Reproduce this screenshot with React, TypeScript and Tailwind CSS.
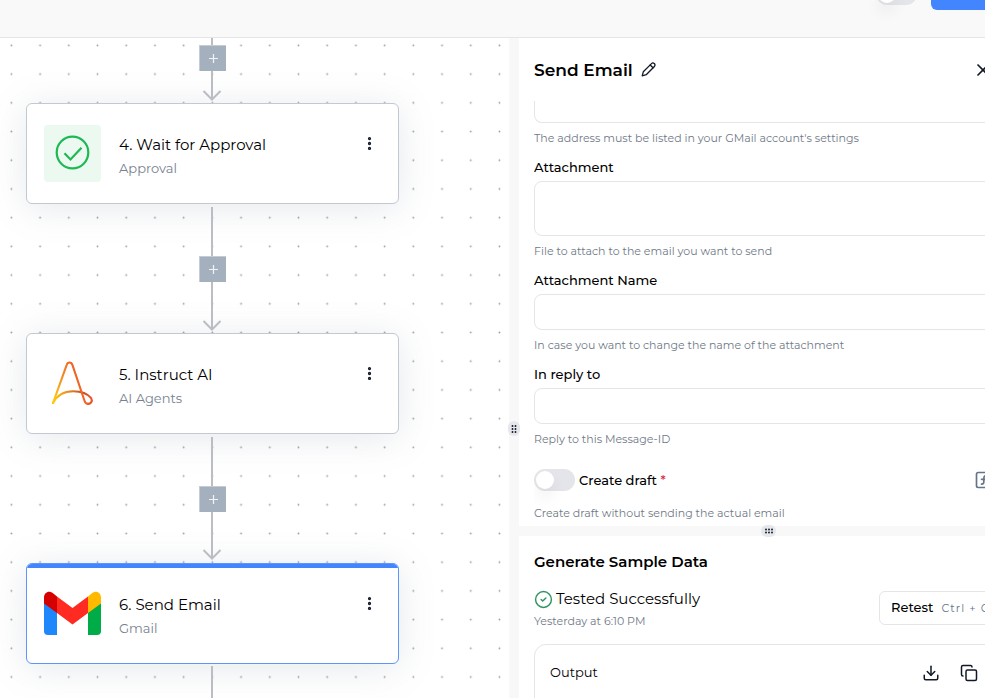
import { ReactNode, useState } from 'react';
import { CircleCheck, Copy, Download, EllipsisVertical, SquareFunction, X } from 'lucide-react';

const ZOOM = 0.957;
const GRID = 30 * ZOOM;

function ApprovalIcon() {
  return (
    <svg className="w-[57px] h-[57px] rounded-sm bg-[#ecf9f1]" viewBox="0 0 57 57" fill="none" stroke="#1fb954" strokeWidth={2.2}>
      <circle cx="28.5" cy="27.5" r="15.8" />
      <path d="M20.5 28.2l6 6.2L37.5 22.8" />
    </svg>
  );
}

function AgentIcon() {
  return (
    <svg className="w-[57px] h-[57px]" viewBox="0 0 57 57" fill="none" strokeWidth={2.1} strokeLinecap="round" strokeLinejoin="round">
      <defs>
        <linearGradient id="agent" gradientUnits="userSpaceOnUse" x1="8" y1="40" x2="40" y2="28">
          <stop offset="0" stopColor="#ffc90e" />
          <stop offset="0.5" stopColor="#f2892a" />
          <stop offset="1" stopColor="#ee5626" />
        </linearGradient>
        <linearGradient id="agentArc" gradientUnits="userSpaceOnUse" x1="9" y1="48" x2="47" y2="38">
          <stop offset="0" stopColor="#ffd000" />
          <stop offset="0.45" stopColor="#ec8a22" />
          <stop offset="0.78" stopColor="#c05420" />
          <stop offset="1" stopColor="#f0562a" />
        </linearGradient>
      </defs>
      <path stroke="url(#agentArc)" d="M9 48C13 40 20 36.3 29 36.2C38 36.2 44 39 47.200 43.200C49 46.500 46.500 49.200 43.500 48.800" />
      <path stroke="url(#agent)" d="M9 48L22.700 9.800C23.600 6.800 27.400 6.800 28.400 9.800L40.400 45.500C41 47.700 42 48.800 43.800 48.800" />
    </svg>
  );
}

function GmailIcon() {
  return (
    <svg className="w-[57px] h-[57px]" viewBox="0 0 57 57">
      <path fill="#1f87fc" d="M0 17L13 26V50H4a4 4 0 0 1-4-4z" />
      <path fill="#00ac47" d="M57 17L44 26V50h9a4 4 0 0 0 4-4z" />
      <path fill="#ffba00" d="M44 11.500l4-3.200C52 4.800 57 7.500 57 12.500V18.500L44 28z" />
      <path fill="#d50000" d="M0 12.500C0 7.500 5 4.800 9 8.300L13 11.500V28L0 18.500z" />
      <path fill="#ff2b22" d="M13 11.500L28.500 23L44 11.500V28L28.500 39.500L13 28z" />
    </svg>
  );
}

function PencilIcon() {
  return (
    <svg width="15" height="15" viewBox="0 0 15 15" fill="none" stroke="#111827" strokeWidth={1.3} strokeLinejoin="round" strokeLinecap="round">
      <path d="M1.200 13.800L2.300 9.800L10.500 1.600C11.300 .8 12.500 .8 13.300 1.600C14.200 2.400 14.200 3.700 13.400 4.500L5.200 12.700Z" />
      <path d="M9.200 3L12 5.800" />
    </svg>
  );
}

type StepProps = { className: string; title: string; app: string; icon: ReactNode; selected?: boolean };

function StepNode({ className, title, app, icon, selected }: StepProps) {
  return (
    <div
      className={`absolute left-[26px] w-[373px] h-[101px] rounded-md border bg-white shadow-[0_4px_36px_rgba(100,116,139,0.17)] overflow-hidden ${
        selected ? 'border-[#5c95fb]' : 'border-[#c2c9d2]'
      } ${className}`}
    >
      <div className={`h-1 ${selected ? 'bg-[#4285ff]' : ''}`} />
      <div className="flex items-start gap-[18px] pt-[17px] pl-[17px] pr-[17px]">
        {icon}
        <div className="flex-1 mt-2">
          <div className="text-[15px] leading-6 text-black">{title}</div>
          <div className="text-[13px] leading-[22px] text-[#77818e]">{app}</div>
        </div>
        <button type="button" aria-label="Step actions" className="mt-2 w-6 h-5 flex items-center justify-center">
          <EllipsisVertical size={17} strokeWidth={2.6} />
        </button>
      </div>
    </div>
  );
}

function AddButton({ className }: { className: string }) {
  return (
    <button
      type="button"
      aria-label="Add step"
      className={`absolute left-[199px] w-[27px] h-[26px] border-l border-t border-[#c5ccd5] bg-[#a5b0be] flex items-center justify-center ${className}`}
    >
      <svg width="9" height="9" viewBox="0 0 9 9" stroke="#f1f4f7" strokeWidth={1.2}>
        <path d="M4.500 0V9M0 4.500H9" />
      </svg>
    </button>
  );
}

function FlowCanvas() {
  return (
    <div className="relative flex-[509] min-w-0 overflow-hidden bg-white">
      <svg className="w-full h-full" fill="none">
        <pattern id="dots" x={11.4 - GRID / 2} y={7.4 - GRID / 2} width={GRID} height={GRID} patternUnits="userSpaceOnUse">
          <circle cx={GRID / 2} cy={GRID / 2} r="0.9" fill="#9a9da2" />
        </pattern>
        <rect width="100%" height="100%" fill="url(#dots)" />
      </svg>
      <StepNode className="top-[65px]" title="4. Wait for Approval" app="Approval" icon={<ApprovalIcon />} />
      <StepNode className="top-[295px]" title="5. Instruct AI" app="AI Agents" icon={<AgentIcon />} />
      <StepNode className="top-[525px]" title="6. Send Email" app="Gmail" icon={<GmailIcon />} selected />
      <svg className="absolute inset-0 w-full h-full pointer-events-none" fill="none" stroke="#bbbdc3" strokeWidth={2}>
        <path d="M212 0V61M203.500 53L212 61.500L220.500 53" />
        <path d="M212 169V291M203.500 283L212 291.500L220.500 283" />
        <path d="M212 399V521M203.500 512L212 520.500L220.500 512" />
        <path d="M212 628V800" />
      </svg>
      <AddButton className="top-[7px]" />
      <AddButton className="top-[218px]" />
      <AddButton className="top-[448px]" />
    </div>
  );
}

function Grip({ horizontal }: { horizontal?: boolean }) {
  return (
    <div className={`z-10 shrink-0 rounded-full bg-[#e5e7eb] flex items-center justify-center ${horizontal ? 'w-[15px] h-3' : 'w-3 h-[15px]'}`}>
      <svg width="8" height="8" viewBox="0 0 8 8" fill="#111827" className={horizontal ? 'rotate-90' : ''}>
        {[1, 4, 7].map((y) => (
          <g key={y}>
            <circle cx="2.500" cy={y} r="0.95" />
            <circle cx="5.500" cy={y} r="0.95" />
          </g>
        ))}
      </svg>
    </div>
  );
}

function Toggle({ id, label }: { id: string; label?: string }) {
  const [on, setOn] = useState(false);
  return (
    <span className={`relative inline-flex shrink-0 w-[41px] h-[22px] rounded-full ${on ? 'bg-[#4285ff]' : 'bg-[#e4e5ea]'}`}>
      <input
        id={id}
        type="checkbox"
        role="switch"
        aria-label={label}
        checked={on}
        onChange={(e) => setOn(e.target.checked)}
        className="absolute inset-0 w-full h-full appearance-none cursor-pointer"
      />
      <span
        className={`relative pointer-events-none m-0.5 w-[18px] h-[18px] rounded-full bg-white shadow-[0_10px_15px_rgba(0,0,0,0.06)] ${
          on ? 'ml-[21px]' : ''
        }`}
      />
    </span>
  );
}

function Hint({ children }: { children: ReactNode }) {
  return <p className="text-[11px] leading-4 text-[#6f7986]">{children}</p>;
}

const fieldStyle = 'block w-full mb-[7px] rounded-lg border border-[#e3e5e8] bg-white px-3 text-sm resize-none outline-none';
const labelStyle = 'block mb-1 text-[13px] leading-5 font-medium text-black';

function StepSettings() {
  return (
    <section className="h-[488px] shrink-0 flex flex-col bg-white px-[15px] overflow-hidden">
      <div className="h-[63px] shrink-0 flex items-center gap-2 pr-2.5">
        <h2 className="text-[17px] leading-6 font-semibold text-black">Send Email</h2>
        <button type="button" aria-label="Rename step">
          <PencilIcon />
        </button>
        <button type="button" aria-label="Close" className="ml-auto">
          <X size={20} strokeWidth={2} />
        </button>
      </div>
      <form className="flex-1 overflow-hidden">
        <div>
          <textarea aria-label="Sender email" className={`${fieldStyle} h-[22px] rounded-t-none border-t-0`} />
          <Hint>The address must be listed in your GMail account's settings</Hint>
        </div>
        <div className="mt-[11px]">
          <label htmlFor="attachment" className={labelStyle}>Attachment</label>
          <textarea id="attachment" className={`${fieldStyle} h-[55px]`} />
          <Hint>File to attach to the email you want to send</Hint>
        </div>
        <div className="mt-[11px]">
          <label htmlFor="attachmentName" className={labelStyle}>Attachment Name</label>
          <input id="attachmentName" type="text" className={`${fieldStyle} h-9`} />
          <Hint>In case you want to change the name of the attachment</Hint>
        </div>
        <div className="mt-[11px]">
          <label htmlFor="inReplyTo" className={labelStyle}>In reply to</label>
          <input id="inReplyTo" type="text" className={`${fieldStyle} h-9`} />
          <Hint>Reply to this Message-ID</Hint>
        </div>
        <div className="mt-[22px]">
          <div className="flex items-center gap-1 pr-[9px] mb-[14px]">
            <Toggle id="createDraft" />
            <label htmlFor="createDraft" className="text-[13px] leading-5 font-medium text-black">
              Create draft <span className="text-[#dc2645]">*</span>
            </label>
            <button type="button" aria-label="Dynamic value" className="ml-auto text-[#64748b]">
              <SquareFunction size={20} strokeWidth={2} />
            </button>
          </div>
          <Hint>Create draft without sending the actual email</Hint>
        </div>
      </form>
    </section>
  );
}

function SampleData() {
  return (
    <section className="flex-1 bg-white px-[15px] pt-[14px] overflow-hidden">
      <h3 className="text-[15px] leading-6 font-semibold text-black">Generate Sample Data</h3>
      <div className="mt-[13px] flex items-center justify-between">
        <div>
          <div className="flex items-center gap-[3px] text-[15px] leading-6 text-black">
            <CircleCheck size={19} strokeWidth={1.8} className="text-[#2f9461]" />
            Tested Successfully
          </div>
          <p className="mt-0.5 text-[11px] leading-4 text-[#6f7986]">Yesterday at 6:10 PM</p>
        </div>
        <button type="button" className="h-[34px] w-[124px] shrink-0 rounded-md border border-[#e3e5e8] pl-[11px] flex items-center gap-2 overflow-hidden text-[13px] font-medium text-black whitespace-nowrap">
          Retest
          <span className="text-[11px] font-normal tracking-widest text-[#64748b]">Ctrl + G</span>
        </button>
      </div>
      <div className="mt-[15px] h-[200px] rounded-xl border border-[#e3e5e8]">
        <div className="h-14 pl-[15px] pr-6 flex items-center gap-5">
          <span className="flex-1 text-[13px] text-black">Output</span>
          <button type="button" aria-label="Download output">
            <Download size={18} strokeWidth={2} />
          </button>
          <button type="button" aria-label="Copy output">
            <Copy size={18} strokeWidth={2} />
          </button>
        </div>
      </div>
    </section>
  );
}

export default function App() {
  return (
    <div className="h-screen overflow-hidden bg-[#f9f9f9] font-['Montserrat','Inter',sans-serif] text-[#111827]">
      <div className="flex flex-col w-[calc(100%+33px)] h-[calc(100%+121px)]">
        <header className="h-[38px] shrink-0 flex items-end justify-end border-b border-[#e5e5e5] pb-[27px] overflow-hidden">
          <div className="h-8 flex items-center gap-[14px]">
            <Toggle id="flowEnabled" label="Enable flow" />
            <button type="button" aria-label="Publish" className="h-8 w-[87px] rounded-md bg-[#4285ff]" />
          </div>
        </header>
        <main className="flex-1 min-h-0 flex">
          <FlowCanvas />
          <div className="w-2.5 shrink-0 flex items-center justify-center bg-[#f8f8f8]">
            <Grip />
          </div>
          <div className="flex-[499] min-w-0 flex flex-col">
            <StepSettings />
            <div className="h-2.5 shrink-0 flex items-center justify-center bg-[#f8f8f8]">
              <Grip horizontal />
            </div>
            <SampleData />
          </div>
        </main>
      </div>
    </div>
  );
}
